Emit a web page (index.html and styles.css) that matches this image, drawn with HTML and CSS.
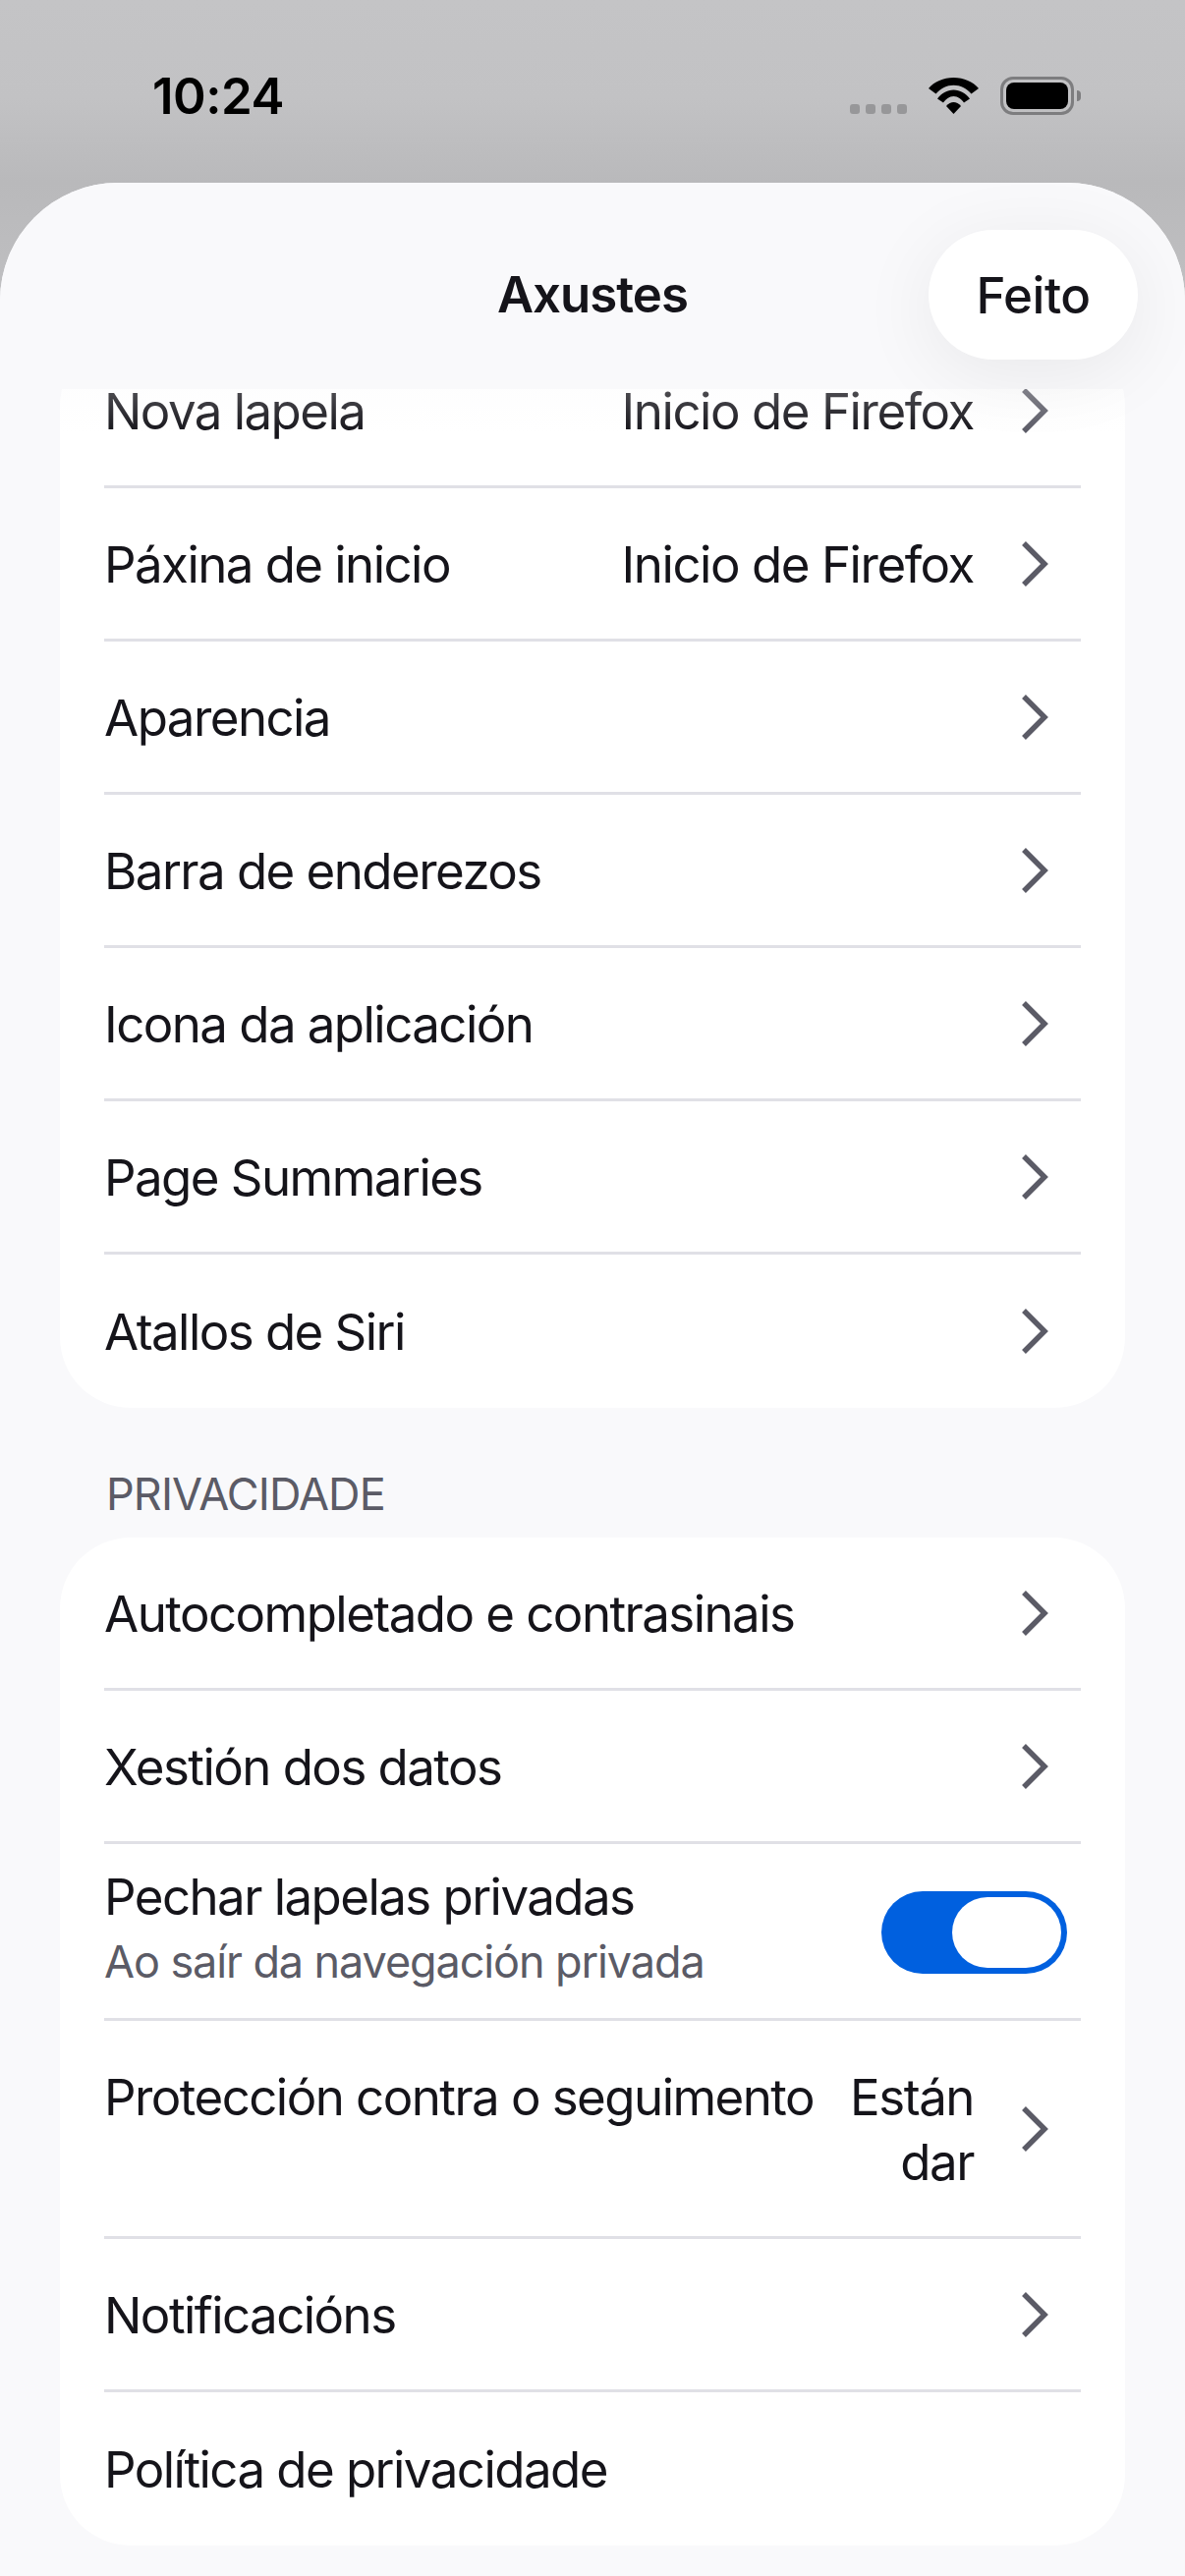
FILE: index.html
```html
<!DOCTYPE html>
<html lang="gl">
<head>
  <meta charset="UTF-8">
  <title>Axustes</title>
  <meta name="viewport" content="width=device-width, initial-scale=1.0">
  <link rel="stylesheet" href="styles.css">
</head>
<body>
  <div class="status-bar">
    <span class="time">10:24</span>
    <div class="status-icons">
      <div class="signal"><i></i><i></i><i></i><i></i></div>
      <svg class="wifi" width="51" height="37" viewBox="0 0 51 37">
        <path fill="#000" d="M0 11C6 4 15 0 25.5 0S45 4 51 11L43.5 16.5C38.5 11 32.5 7.7 25.5 7.7S12.5 11 7.5 16.5Z"/>
        <path fill="#000" d="M9 21.5C13 16 19 12.5 25.5 12.5S38 16 42 21.5L36 25.5C33.5 22 30 19 25.5 19S17.5 22 15 25.5Z"/>
        <path fill="#000" d="M18 29C20 26.5 23 25 25.5 25S31 26.5 33 29L25.5 37Z"/>
      </svg>
      <div class="battery"><div class="battery-fill"></div></div>
      <div class="battery-cap"></div>
    </div>
  </div>

  <div class="sheet">
    <header class="nav">
      <h1>Axustes</h1>
      <button class="done">Feito</button>
    </header>

    <div class="scroll">
      <div class="card card-scrolled">
        <div class="row"><span class="label">Nova lapela</span><span class="value">Inicio de Firefox</span><svg class="chev" viewBox="0 0 28 46"><path d="M3 2l21 21L3 44"/></svg></div>
        <div class="row"><span class="label">Páxina de inicio</span><span class="value">Inicio de Firefox</span><svg class="chev" viewBox="0 0 28 46"><path d="M3 2l21 21L3 44"/></svg></div>
        <div class="row"><span class="label">Aparencia</span><svg class="chev" viewBox="0 0 28 46"><path d="M3 2l21 21L3 44"/></svg></div>
        <div class="row"><span class="label">Barra de enderezos</span><svg class="chev" viewBox="0 0 28 46"><path d="M3 2l21 21L3 44"/></svg></div>
        <div class="row"><span class="label">Icona da aplicación</span><svg class="chev" viewBox="0 0 28 46"><path d="M3 2l21 21L3 44"/></svg></div>
        <div class="row"><span class="label">Page Summaries</span><svg class="chev" viewBox="0 0 28 46"><path d="M3 2l21 21L3 44"/></svg></div>
        <div class="row"><span class="label">Atallos de Siri</span><svg class="chev" viewBox="0 0 28 46"><path d="M3 2l21 21L3 44"/></svg></div>
      </div>

      <h2 class="section-title">PRIVACIDADE</h2>

      <div class="card">
        <div class="row"><span class="label">Autocompletado e contrasinais</span><svg class="chev" viewBox="0 0 28 46"><path d="M3 2l21 21L3 44"/></svg></div>
        <div class="row"><span class="label">Xestión dos datos</span><svg class="chev" viewBox="0 0 28 46"><path d="M3 2l21 21L3 44"/></svg></div>
        <div class="row row-toggle">
          <div class="label-stack">
            <span class="label">Pechar lapelas privadas</span>
            <span class="sub">Ao saír da navegación privada</span>
          </div>
          <div class="toggle"><div class="knob"></div></div>
        </div>
        <div class="row row-tall"><span class="label">Protección contra o seguimento</span><span class="value">Están<br>dar</span><svg class="chev" viewBox="0 0 28 46"><path d="M3 2l21 21L3 44"/></svg></div>
        <div class="row"><span class="label">Notificacións</span><svg class="chev" viewBox="0 0 28 46"><path d="M3 2l21 21L3 44"/></svg></div>
        <div class="row"><span class="label">Política de privacidade</span></div>
      </div>
    </div>
  </div>
</body>
</html>
```

FILE: styles.css
```css
html, body { margin: 0; height: 2622px; overflow: hidden; }
body { font-family: Inter, "Liberation Sans", sans-serif; background: linear-gradient(#c4c4c6, #c2c2c4 100px, #b9b9bb 186px, #bfbfc1 300px); color: #15141a; display: flex; flex-direction: column; }

.status-bar { height: 186px; flex: none; display: flex; justify-content: space-between; align-items: flex-start; box-sizing: border-box; padding: 67px 106px 0 155px; }
.time { font-size: 51px; font-weight: 600; line-height: 62px; color: #000; letter-spacing: -0.5px; }
.status-icons { display: flex; align-items: center; margin-top: 11px; }
.signal { display: flex; gap: 6px; margin-right: 22px; margin-top: 27px; }
.signal i { width: 10px; height: 10px; border-radius: 3px; background: #979799; }
.wifi { margin-right: 22px; }
.battery { width: 75px; height: 39px; box-sizing: border-box; border: 3px solid #7d7d7f; border-radius: 13px; padding: 3px; }
.battery-fill { height: 100%; background: #000; border-radius: 8px; }
.battery-cap { width: 4px; height: 11px; margin-left: 3px; background: #7d7d7f; border-radius: 0 5px 5px 0; }

.sheet { flex: 1; min-height: 0; display: flex; flex-direction: column; background: #f9f9fb; border-radius: 120px 120px 0 0; overflow: hidden; }
.nav { height: 210px; flex: none; display: flex; align-items: center; justify-content: center; position: relative; z-index: 1; background: #f9f9fb; }
.nav::after { content: ""; position: absolute; left: 0; right: 0; top: 100%; height: 45px; background: linear-gradient(rgba(249, 249, 251, 0.25), rgba(249, 249, 251, 0)); }
.nav h1 { margin: 18px 0 0; font-size: 51px; font-weight: 600; line-height: 62px; letter-spacing: -1px; }
.done { position: absolute; top: 48px; right: 48px; width: 213px; height: 132px; border: 0; border-radius: 66px; background: #fff; color: #15141a; font: 500 51px Inter, "Liberation Sans", sans-serif; letter-spacing: -0.5px; box-shadow: 0 14px 80px rgba(0, 0, 0, 0.07); z-index: 2; }

.scroll { flex: 1; min-height: 0; overflow: hidden; padding: 0 61px; }
.card { background: #fff; border-radius: 72px; padding: 0 45px; }
.card-scrolled { margin-top: -55px; }
.row { min-height: 153px; border-bottom: 3px solid #e0e0e6; display: flex; align-items: center; font-size: 51px; line-height: 62px; letter-spacing: -1.55px; }
.row:last-child { border-bottom: 0; min-height: 156px; }
.row-toggle { min-height: 177px; }
.row-tall { min-height: 219px; line-height: 66px; }
.row-tall .label { padding-bottom: 66px; }
.label { flex: 1; white-space: nowrap; padding-top: 2px; }
.value { color: #15141a; margin-right: 48px; text-align: right; padding-top: 2px; letter-spacing: -1.45px; }
.chev { width: 28px; height: 46px; flex: none; margin-right: 33px; fill: none; stroke: #5b5b66; stroke-width: 5.5; }
.label-stack { flex: 1; display: flex; flex-direction: column; padding-bottom: 8px; }
.label-stack .label { flex: none; padding-top: 0; }
.sub { font-size: 45px; line-height: 52px; color: #5b5b66; margin-top: 9px; letter-spacing: -1.1px; }
.toggle { width: 189px; height: 84px; box-sizing: border-box; padding: 6px; margin: 3px 14px 0 0; border-radius: 42px; background: #0060df; display: flex; justify-content: flex-end; }
.knob { width: 111px; height: 72px; border-radius: 36px; background: #fff; }
.section-title { margin: 0; padding: 63px 47px 20px; font-size: 45px; font-weight: 400; line-height: 49px; color: #5b5b66; letter-spacing: -0.9px; }
```
